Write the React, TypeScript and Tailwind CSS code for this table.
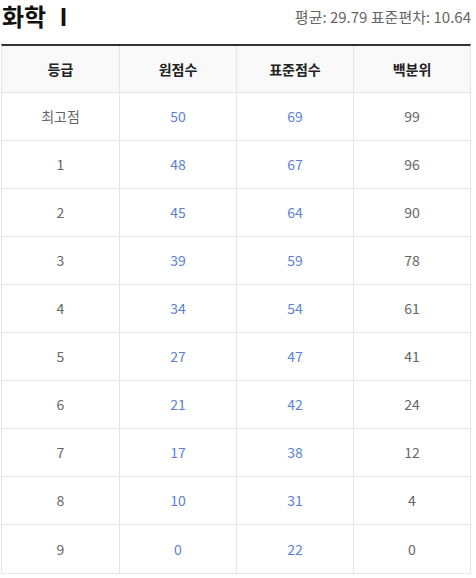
import * as React from "react";

const rows: [string, number, number, number][] = [
  ["최고점", 50, 69, 99],
  ["1", 48, 67, 96],
  ["2", 45, 64, 90],
  ["3", 39, 59, 78],
  ["4", 34, 54, 61],
  ["5", 27, 47, 41],
  ["6", 21, 42, 24],
  ["7", 17, 38, 12],
  ["8", 10, 31, 4],
  ["9", 0, 22, 0],
];

const headers = ["등급", "원점수", "표준점수", "백분위"];

export default function App() {
  return (
    <div className="w-[476px] h-[578px] bg-white font-['Noto_Sans_CJK_KR','Noto_Sans',sans-serif] pl-px">
      {/* Title */}
      <div className="flex h-[44px] items-start justify-between w-[470px]">
        <h2 className="pl-px text-[24px] leading-[32px] font-semibold text-[#111]">화학 Ⅰ</h2>
        <p className="pt-[6px] text-[15px] leading-[22px] text-[#666]">
          평균: 29.79 표준편차: 10.64
        </p>
      </div>

      {/* Table */}
      <div className="w-[470px] border-t-2 border-t-[#333] border-x border-x-[#e5e5e5] border-b border-b-[#e5e5e5]">
        <div className="grid grid-cols-[118px_117px_117px_116px] h-[47px] bg-[#f9f9f9] border-b border-[#e5e5e5]">
          {headers.map((h, i) => (
            <div
              key={h}
              className={`flex items-center justify-center text-[14px] font-bold text-[#222] ${i < 3 ? "border-r border-[#e5e5e5]" : ""}`}
            >
              {h}
            </div>
          ))}
        </div>
        {rows.map((r, ri) => (
          <div
            key={r[0]}
            className={`grid grid-cols-[118px_117px_117px_116px] h-[48px] ${ri < rows.length - 1 ? "border-b border-[#e5e5e5]" : "h-[47px]"}`}
          >
            <div className="flex items-center justify-center border-r border-[#e5e5e5] text-[14px] text-[#666]">
              {r[0]}
            </div>
            <div className="flex items-center justify-center border-r border-[#e5e5e5] text-[14px] text-[#5b7fd6]">
              {r[1]}
            </div>
            <div className="flex items-center justify-center border-r border-[#e5e5e5] text-[14px] text-[#5b7fd6]">
              {r[2]}
            </div>
            <div className="flex items-center justify-center text-[14px] text-[#666]">
              {r[3]}
            </div>
          </div>
        ))}
      </div>
    </div>
  );
}
